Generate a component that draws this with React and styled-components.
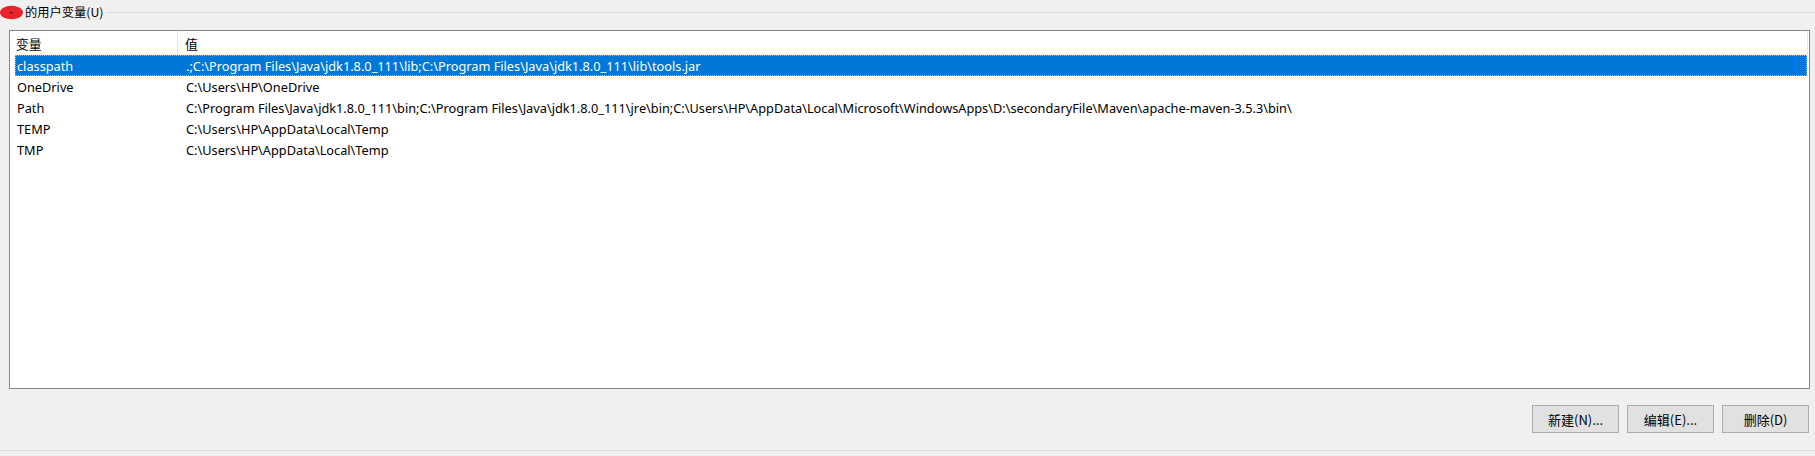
import React from "react";
import styled, { createGlobalStyle } from "styled-components";

const Global = createGlobalStyle`
  html, body { margin: 0; padding: 0; background: #f0f0f0; }
  body {
    font-family: "Noto Sans", "Noto Sans CJK SC", sans-serif;
    font-size: 12.75px;
    color: #000;
  }
`;

const Page = styled.div`
  width: 1815px;
  height: 456px;
  display: flex;
  flex-direction: column;
  background: #f0f0f0;
  overflow: hidden;
`;

const GroupHeader = styled.div`
  height: 24px;
  display: flex;
  align-items: center;
`;

const Blob = styled.svg`
  width: 24px;
  height: 15px;
  flex: none;
`;

const GroupLabel = styled.span`
  margin-left: 1px;
  font-family: "Noto Sans CJK SC", "Noto Sans", sans-serif;
  font-size: 12.25px;
  white-space: nowrap;
  line-height: 1;
`;

const GroupLine = styled.div`
  flex: 1;
  height: 1px;
  margin-left: 4px;
  background: #dcdcdc;
`;

const ListBox = styled.div`
  margin: 6px 5px 0 9px;
  height: 359px;
  box-sizing: border-box;
  border: 1px solid #828790;
  background: #fff;
  display: flex;
  flex-direction: column;
`;

const HeaderRow = styled.div`
  height: 24px;
  display: grid;
  grid-template-columns: 168px 1fr;
  border-right: 1px solid #e5e5e5;
  margin-right: 1px;
`;

const HeaderCell = styled.div`
  display: flex;
  align-items: center;
  padding-left: ${(p) => p.$pad}px;
  font-family: "Noto Sans CJK SC", "Noto Sans", sans-serif;
  font-size: 12.75px;
  border-right: ${(p) => (p.$sep ? "1px solid #e5e5e5" : "none")};
`;

const Rows = styled.div`
  margin: 0 2px 0 5px;
  display: flex;
  flex-direction: column;
`;

const Row = styled.div`
  height: 21px;
  box-sizing: border-box;
  display: grid;
  grid-template-columns: 163px 1fr;
  align-items: center;
  white-space: nowrap;
  background: ${(p) => (p.$selected ? "#0078d7" : "transparent")};
  color: ${(p) => (p.$selected ? "#fff" : "#000")};
  border: 1px ${(p) => (p.$selected ? "dotted #f5a04e" : "solid transparent")};
`;

const Cell = styled.div`
  padding-left: ${(p) => p.$pad}px;
  overflow: hidden;
`;

const Footer = styled.div`
  display: flex;
  justify-content: flex-end;
  gap: 8px;
  padding: 16px 6px 0 0;
`;

const Button = styled.button`
  width: 87px;
  height: 28px;
  box-sizing: border-box;
  background: #e1e1e1;
  border: 1px solid #adadad;
  border-radius: 0;
  font-family: "Noto Sans CJK SC", "Noto Sans", sans-serif;
  font-size: 13px;
  color: #000;
  padding: 0;
`;

const BottomLine = styled.div`
  margin-top: 17px;
  height: 1px;
  background: #dcdcdc;
`;

const rows = [
  {
    name: "classpath",
    value: ".;C:\\Program Files\\Java\\jdk1.8.0_111\\lib;C:\\Program Files\\Java\\jdk1.8.0_111\\lib\\tools.jar",
    selected: true,
  },
  { name: "OneDrive", value: "C:\\Users\\HP\\OneDrive" },
  {
    name: "Path",
    value:
      "C:\\Program Files\\Java\\jdk1.8.0_111\\bin;C:\\Program Files\\Java\\jdk1.8.0_111\\jre\\bin;C:\\Users\\HP\\AppData\\Local\\Microsoft\\WindowsApps\\D:\\secondaryFile\\Maven\\apache-maven-3.5.3\\bin\\",
  },
  { name: "TEMP", value: "C:\\Users\\HP\\AppData\\Local\\Temp" },
  { name: "TMP", value: "C:\\Users\\HP\\AppData\\Local\\Temp" },
];

export default function App() {
  return (
    <Page>
      <Global />
      <GroupHeader>
        <Blob viewBox="0 0 24 15">
          <ellipse cx="11.5" cy="7.5" rx="11.5" ry="6.8" fill="#e8232b" />
          <rect x="9.5" y="7" width="3.5" height="1.2" fill="#5a1a1a" />
        </Blob>
        <GroupLabel>的用户变量(U)</GroupLabel>
        <GroupLine />
      </GroupHeader>
      <ListBox>
        <HeaderRow>
          <HeaderCell $pad={6} $sep>变量</HeaderCell>
          <HeaderCell $pad={7}>值</HeaderCell>
        </HeaderRow>
        <Rows>
          {rows.map((r) => (
            <Row key={r.name} $selected={r.selected}>
              <Cell $pad={1}>{r.name}</Cell>
              <Cell $pad={7}>{r.value}</Cell>
            </Row>
          ))}
        </Rows>
      </ListBox>
      <Footer>
        <Button>新建(N)...</Button>
        <Button>编辑(E)...</Button>
        <Button>删除(D)</Button>
      </Footer>
      <BottomLine />
    </Page>
  );
}
